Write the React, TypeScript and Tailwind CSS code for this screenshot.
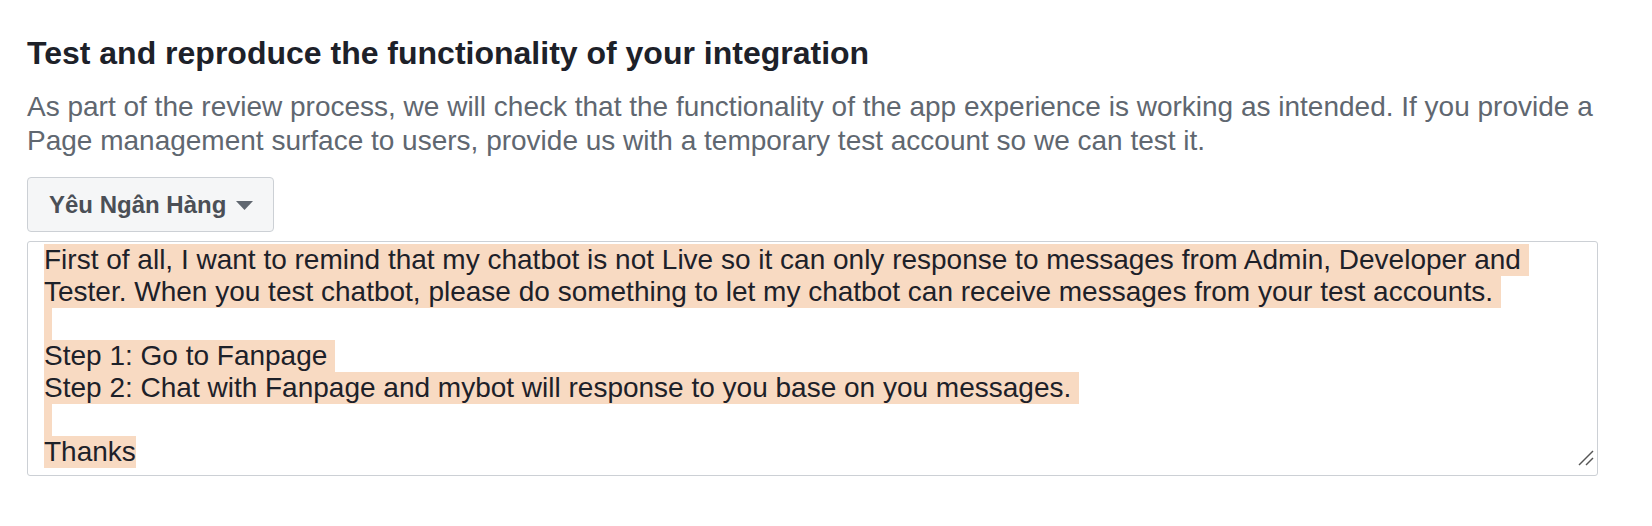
import React from "react";

const lines: string[] = [
  "First of all, I want to remind that my chatbot is not Live so it can only response to messages from Admin, Developer and ",
  "Tester. When you test chatbot, please do something to let my chatbot can receive messages from your test accounts. ",
  " ",
  "Step 1: Go to Fanpage ",
  "Step 2: Chat with Fanpage and mybot will response to you base on you messages. ",
  " ",
  "Thanks",
];

export default function App() {
  return (
    <div
      className="w-[1652px] h-[526px] bg-white pl-[27px] pt-[33px]"
      style={{ fontFamily: '"Liberation Sans", Arial, Helvetica, sans-serif' }}
    >
      <h2 className="text-[32px] leading-[40px] font-bold text-[#1d2129]">
        Test and reproduce the functionality of your integration
      </h2>
      <p className="mt-[17px] w-[1580px] text-[28px] leading-[34px] text-[#606770]">
        As part of the review process, we will check that the functionality of the app experience is working as intended. If you provide a
        <br />
        Page management surface to users, provide us with a temporary test account so we can test it.
      </p>
      <div className="mt-[19px] flex h-[55px] w-[247px] items-center gap-[10px] rounded-[4px] border border-[#ccd0d5] bg-[#f5f6f7] pl-[21px] text-[24px] font-bold text-[#4b4f56]">
        <span>Yêu Ngân Hàng</span>
        <svg width="17" height="9" viewBox="0 0 17 9" className="mt-[2px]">
          <polygon points="0,0 17,0 8.5,9" fill="#606770" />
        </svg>
      </div>
      <div className="relative mt-[9px] h-[235px] w-[1571px] rounded-[3px] border border-[#ccd0d5] bg-white pl-[16px] pt-[2px] text-[28px] leading-[32px] text-[#1d2129]">
        {lines.map((l, i) => (
          <div key={i} className="h-[32px] whitespace-pre">
            <span className="inline-block h-[32px] align-top bg-[#f8dac2]">{l}</span>
          </div>
        ))}
        <svg
          width="16"
          height="16"
          viewBox="0 0 16 16"
          className="absolute right-[3px] bottom-[9px]"
        >
          <line x1="1" y1="15" x2="15" y2="1" stroke="#555" strokeWidth="1.4" />
          <line x1="8" y1="15" x2="15" y2="8" stroke="#555" strokeWidth="1.4" />
        </svg>
      </div>
    </div>
  );
}
